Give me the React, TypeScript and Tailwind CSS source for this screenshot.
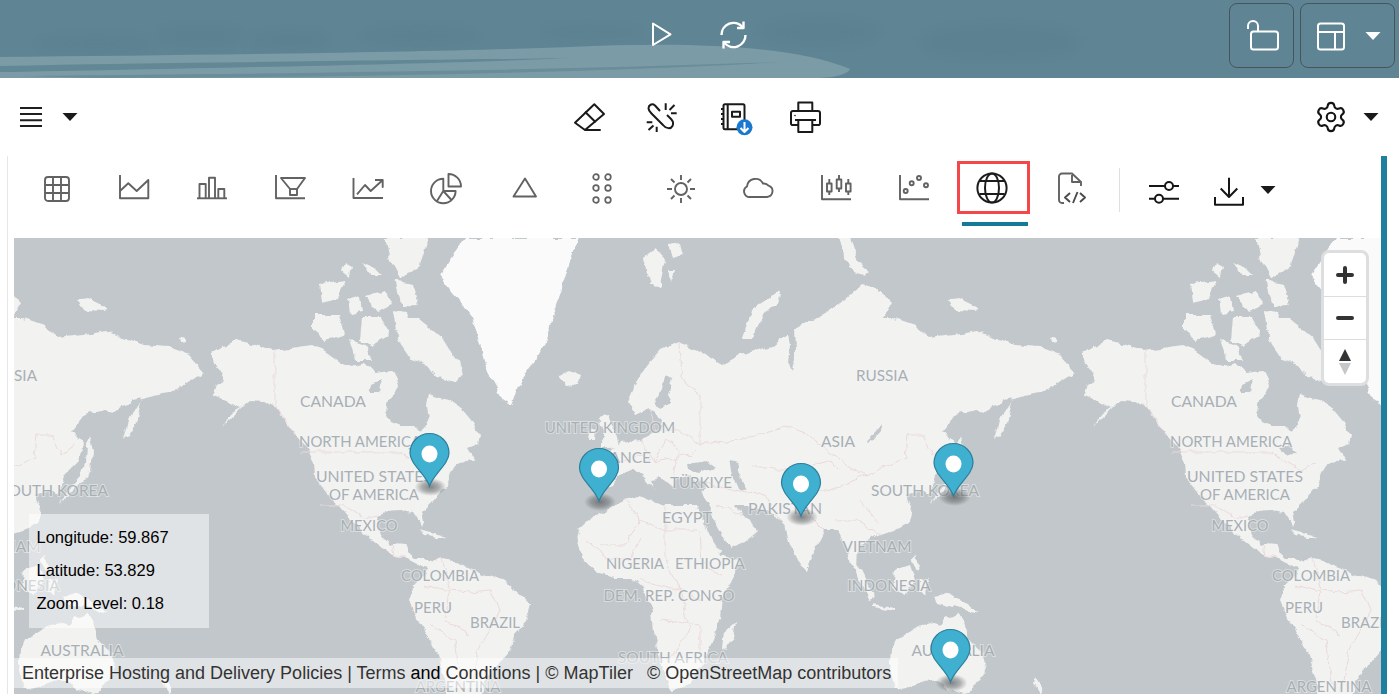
import React from "react";
import { Settings } from "lucide-react";

const Ic = ({ children, color = "#626262", w = 1.9 }: { children: React.ReactNode; color?: string; w?: number }) => (
  <svg width="32" height="32" viewBox="0 0 32 32" fill="none" stroke={color} strokeWidth={w} strokeLinejoin="round" strokeLinecap="butt" className="block shrink-0 overflow-visible">
    {children}
  </svg>
);

const Caret = ({ color = "#1a1a1a" }: { color?: string }) => (
  <svg width="16" height="8" viewBox="0 0 16 8" className="block shrink-0"><path d="M0.5 0H15.5L8 8Z" fill={color} /></svg>
);

const land: string[] = [
  "212,352 222,346 237,340 250,343 272,351 290,349 312,346 325,352 339,362 352,366 365,362 375,372 393,370 400,384 395,392 388,401 386,412 392,422 402,426 414,426 420,432 425,428 428,418 426,405 428,394 436,397 448,400 460,408 470,420 480,436 478,444 468,448 474,458 462,462 455,466 449,476 445,488 437,497 428,506 422,512 424,522 422,527 417,518 413,512 400,510 388,511 379,515 377,525 380,533 390,545 395,543 405,544 408,552 415,558 424,558 434,562 430,568 424,567 410,560 397,556 383,548 370,538 355,524 345,512 339,505 330,497 315,478 314,462 305,445 295,435 285,422 277,408 263,402 250,401 243,407 232,418 223,428 232,413 241,408 228,402 214,395 217,385 225,380 219,371 212,362",
  "430,563 442,558 455,560 468,568 482,574 497,578 515,590 531,605 526,622 515,634 510,650 498,665 490,672 482,690 478,700 448,700 445,680 438,655 425,632 414,615 409,600 414,585 424,575",
  "576,540 580,527 590,518 603,512 612,506 625,500 638,496 650,500 665,505 680,505 697,505 703,520 712,540 722,556 740,560 735,575 722,598 720,618 713,640 702,665 690,685 672,690 662,670 655,640 652,612 645,590 632,578 615,578 598,574 585,560",
  "585,470 587,485 598,491 610,487 620,475 632,468 645,478 655,490 650,480 660,478 672,488 678,478 690,476 705,482 702,495 708,505 720,530 730,548 745,542 758,531 745,515 735,505 750,505 770,512 785,525 790,545 800,565 807,570 815,550 825,530 838,530 845,545 850,565 857,570 858,545 870,540 880,535 895,530 910,522 912,505 905,495 920,490 930,495 935,475 950,460 955,445 943,430 955,415 975,410 985,412 1005,400 1025,395 1048,390 1075,372 1060,355 1039,347 1015,345 977,331 955,335 928,338 915,325 895,318 883,318 892,302 880,290 862,285 845,300 812,320 795,330 775,345 758,350 740,355 722,365 705,355 680,341 660,350 647,365 635,385 628,401 635,415 650,408 662,420 660,430 640,440 620,442 610,450 612,465 595,468",
  "892,650 895,640 908,633 919,625 930,622 940,625 945,617 953,618 958,612 963,622 970,640 982,652 986,665 980,682 965,694 945,688 938,680 925,682 905,688 895,690 890,670",
  "313,315 340,315 345,335 325,340 313,330",
  "320,283 345,280 335,300 322,303",
  "397,318 418,318 442,338 464,372 455,382 438,378 428,365 412,360 398,340",
  "385,238 428,238 420,265 400,278 390,260",
  "362,262 375,268 382,275 370,275",
  "366,296 385,290 393,306 378,312",
  "362,318 380,318 390,335 372,345 360,340",
  "345,262 352,266 350,278 342,272",
  "348,300 360,296 362,312 350,314",
  "393,310 405,312 410,328 396,330",
  "395,280 412,284 418,305 402,306",
  "350,340 366,345 372,360 356,360",
  "558,376 570,371 581,375 578,384 566,386",
  "643,258 655,248 665,258 660,288 650,285",
  "668,245 680,243 683,255 672,258",
  "668,270 675,270 672,282",
  "598,418 608,416 616,438 618,446 600,448 606,436",
  "590,428 597,430 596,440 589,440",
  "742,338 752,310 780,291 782,296 762,316 752,338",
  "948,300 958,298 979,308 976,311 955,310",
  "838,238 850,238 858,262 870,272 865,276 848,268",
  "960,436 964,452 962,470 950,485 935,498 930,505 935,495 950,478 957,462 958,445",
  "995,441 1000,420 1012,401 1008,420 1000,436",
  "854,560 862,570 875,598 870,600 858,580",
  "872,604 895,608 895,611 872,607",
  "895,570 910,565 915,580 905,595 893,590",
  "920,580 928,578 926,595 920,590",
  "934,597 950,593 960,600 970,607 979,613 965,610 950,606 938,603",
  "915,555 920,565 917,570 912,560",
  "722,648 724,632 736,621 733,638 727,650",
  "1035,678 1042,690 1040,694 1033,684",
  "420,530 435,534 446,538 436,538 425,535",
  "180,338 184,336 186,341 181,342",
];

const water: string[] = [
  "665,375 672,378 668,395 672,402 660,408 655,400 662,388",
  "687,463 705,460 716,468 700,474 688,471",
  "729,461 737,463 741,478 747,491 738,490 733,478",
  "867,443 875,432 882,425 880,432 872,442",
  "787,330 795,328 796,350 792,371 788,362 790,345",
  "372,385 383,380 378,392 370,392",
  "408,448 418,446 426,452 415,456",
];

const borders: string[] = [
  "275,351 275,405 295,435",
  "300,452 395,452 410,458 430,470 445,462",
  "320,505 345,505 365,518 378,515",
  "393,545 395,555 410,560",
  "442,558 450,590 470,592 490,590 500,610 490,630 478,650 470,690",
  "425,585 450,592 445,620 470,635",
  "430,625 455,640 462,690",
  "600,545 625,545 640,520 665,530 697,530",
  "585,540 610,560 630,560 640,540",
  "640,520 625,500",
  "665,505 665,560 680,590 700,600",
  "640,580 680,590 690,630 670,660",
  "700,530 702,565 722,575",
  "660,620 700,625 700,650",
  "612,465 640,455 655,462 665,440 680,450 672,475",
  "640,440 655,462 690,455 700,445",
  "650,408 655,430 680,430 700,445",
  "680,341 682,380 700,395 700,445",
  "700,445 762,435 785,426 803,431 827,451 865,476 905,458 907,435 923,435 932,455 945,445",
  "751,465 775,470 790,470 800,495 830,490 865,476",
  "700,482 740,492 765,495 780,520",
  "715,505 745,515",
  "790,495 825,530",
  "835,520 855,520 880,535",
  "800,470 830,460 838,470",
  "860,500 880,525",
];

const labels: [string, number, number, number][] = [
  ["RUSSIA", 882, 381, 52], ["ASIA", 838, 447, 34], ["CANADA", 333, 407, 66], ["NORTH AMERICA", 360, 447, 122],
  ["UNITED STATES", 374, 482, 116], ["OF AMERICA", 374, 500, 90], ["MEXICO", 369, 531, 57], ["COLOMBIA", 440, 581, 78],
  ["PERU", 433, 613, 38], ["BRAZIL", 495, 628, 50], ["UNITED KINGDOM", 610, 433, 130], ["FRANCE", 621, 463, 60],
  ["TÜRKIYE", 701, 488, 62], ["EGYPT", 687, 523, 50], ["NIGERIA", 635, 569, 58], ["ETHIOPIA", 710, 569, 70],
  ["DEM. REP. CONGO", 669, 601, 131], ["SOUTH AFRICA", 673, 663, 110], ["PAKISTAN", 785, 514, 74],
  ["SOUTH KOREA", 925, 496, 108], ["VIETNAM", 877, 552, 69], ["INDONESIA", 889, 591, 83], ["AUSTRALIA", 953, 656, 83],
  ["ARGENTINA", 458, 692, 85],
];

const World = ({ dx }: { dx: number }) => (
  <g transform={`translate(${dx} 0)`}>
    <g filter="url(#coast)">
      <polygon points="440,275 464,238 579,238 567,271 545,345 527,371 511,404 504,401 487,371 473,318" fill="#fafafa" />
      {land.map((p, i) => <polygon key={i} points={p} fill="#f2f2f1" />)}
      {water.map((p, i) => <polygon key={i} points={p} fill="#c1c7ca" />)}
      {borders.map((p, i) => <polyline key={i} points={p} fill="none" stroke="#ecd9db" strokeWidth="1" />)}
    </g>
    {labels.map(([t, x, y, w]) => (
      <text key={t} x={x} y={y} textAnchor="middle" textLength={w} lengthAdjust="spacingAndGlyphs" fontSize="15" fill="#a8afb3" stroke="#f4f5f5" strokeOpacity="0.5" strokeWidth="2" className="font-['Lato',sans-serif] [paint-order:stroke]">{t}</text>
    ))}
  </g>
);

const Pin = ({ x, y }: { x: number; y: number }) => (
  <g transform={`translate(${x} ${y})`}>
    <ellipse cx="1" cy="1" rx="16" ry="9" fill="url(#pinShadow)" />
    <path d="M0 0C-4 -12 -19.5 -22 -19.5 -33A19.5 19.5 0 0 1 19.5 -33C19.5 -22 4 -12 0 0Z" fill="#3fb0d0" stroke="#2b7f9a" strokeWidth="1.2" />
    <ellipse cx="0" cy="-32" rx="8" ry="8.5" fill="#ffffff" />
  </g>
);

const pins = [[429.5, 486], [599, 501], [801, 516], [953.5, 496], [950.5, 682]];

const Tab = ({ children, active = false, nudge = false }: { children: React.ReactNode; active?: boolean; nudge?: boolean }) => (
  <div className="flex h-full w-[78px] shrink-0 flex-col items-center pt-[5px]">
    <div className={active ? "ml-[3px] flex h-[53px] w-[73px] items-center justify-center border-[3px] border-[#f44749] pr-[3px]" : nudge ? "flex h-[53px] w-[73px] items-center justify-center pl-[2px]" : "flex h-[53px] w-[73px] items-center justify-center"}>{children}</div>
    {active && <div className="ml-[6px] mt-[8px] h-[4px] w-[66px] bg-[#147a9a]" />}
  </div>
);

export default function App() {
  return (
    <div className="flex h-[694px] w-[1399px] flex-col overflow-hidden bg-white font-['Liberation_Sans',sans-serif]">
      <header className="relative grid h-[78px] shrink-0 grid-cols-[1fr_auto_1fr] items-center bg-[#5f8595]">
        <svg className="absolute inset-0 h-full w-full" viewBox="0 0 1399 78" preserveAspectRatio="none">
          <defs><filter id="soft"><feGaussianBlur stdDeviation="6" /></filter></defs>
          <g fill="#4f7381" opacity="0.16" filter="url(#soft)">
            <ellipse cx="95" cy="44" rx="60" ry="9" /><ellipse cx="200" cy="36" rx="45" ry="11" /><ellipse cx="290" cy="40" rx="40" ry="10" />
            <ellipse cx="420" cy="36" rx="60" ry="10" /><ellipse cx="590" cy="32" rx="50" ry="7" /><ellipse cx="820" cy="32" rx="60" ry="14" /><ellipse cx="1000" cy="42" rx="80" ry="18" />
          </g>
          <path d="M0 57C200 55 450 52 570 47C680 42 790 44 850 69C848 74 835 78 815 78L0 78Z" fill="#7b9ba7" />
          <path d="M0 66C200 62 450 60 568 58C450 64 200 68 14 72L0 72Z" fill="#628795" />
          <path d="M20 76C200 74 500 72 780 62C640 72 300 78 100 78Z" fill="#6a8d9a" />
        </svg>
        <div />
        <div className="relative mb-[8px] flex items-center gap-[40px] pr-[3px]">
          <Ic color="#ffffff" w={2}><path d="M7 4.5V26L24.5 15.3Z" /></Ic>
          <Ic color="#ffffff" w={2.4}>
            <path d="M3.5 16A12 12 0 0 1 24.5 8" /><path d="M27.5 16A12 12 0 0 1 6.5 24" /><path d="M25.5 2.5V9H19" /><path d="M5.5 29.5V23H12" />
          </Ic>
        </div>
        <div className="relative flex items-start justify-end gap-[6px] self-start pr-[4px] pt-[3px]">
          <div className="flex h-[65px] w-[65px] items-center justify-center rounded-[8px] border border-[#48545c]">
            <Ic color="#ffffff" w={2}><rect x="5" y="11.5" width="27" height="18" rx="2.5" /><path d="M2 9V6A5 5 0 0 1 12 6V11.5" /></Ic>
          </div>
          <div className="flex h-[65px] w-[95px] items-center justify-start gap-[18px] rounded-[8px] border border-[#48545c] pl-[14px]">
            <Ic color="#ffffff" w={2}><rect x="3" y="3.5" width="26" height="26" rx="2.5" /><path d="M3 12H29M20 12V29" /></Ic>
            <Caret color="#ffffff" />
          </div>
        </div>
      </header>

      <div className="grid h-[78px] shrink-0 grid-cols-[1fr_auto_1fr] items-center">
        <div className="flex items-center gap-[20px] pl-[20px]">
          <svg width="22" height="20" viewBox="0 0 22 20" className="block" stroke="#1f1f1f" strokeWidth="2"><path d="M0 1H22M0 7H22M0 13.3H22M0 19H22" /></svg>
          <Caret />
        </div>
        <div className="flex items-center pr-[3px]">
          <Ic color="#1a1a1a" w={2}><path d="M20.3 3.3L30 13L11 29L1 21.7Z" /><path d="M11 29H26.7M11 10.7L21.7 21.3" /></Ic>
          <div className="ml-[40px]">
            <Ic color="#1a1a1a" w={2}>
              <path d="M14 10L9 4.5C6 2 2.5 4 2.5 7.5C2.5 9.5 4 11 5.5 12.5L17 24C20 28 25 28 26.5 25C28 22 26.5 19.5 25 18L21 14" />
              <path d="M19.7 2.3V9M23.5 9L28.5 4M25 12.3H30.7M0.7 21.3H6.3M2.5 29L7.5 24.5M10.7 25.7V31" />
            </Ic>
          </div>
          <div className="ml-[43px]">
            <Ic color="#1a1a1a" w={2}>
              <rect x="2.5" y="3.3" width="21" height="25" rx="1.5" />
              <path d="M6.7 3.3V28.3M0 8H3M0 13H3M0 18H3M0 23H3" />
              <rect x="11" y="10.7" width="8" height="5" />
              <circle cx="23.5" cy="26.3" r="8" fill="#1a78d0" stroke="none" />
              <path d="M23.5 21V31M19.5 27L23.5 31L27.5 27" stroke="#ffffff" strokeWidth="2" />
            </Ic>
          </div>
          <div className="ml-[37px]">
            <Ic color="#1a1a1a" w={2}>
              <path d="M8.3 10V1.5H22.3V10" />
              <path d="M8 24H2A1.5 1.5 0 0 1 1 22.5V12A2 2 0 0 1 3 10H28A2 2 0 0 1 30 12V22.5A1.5 1.5 0 0 1 29 24H23" />
              <path d="M5 19H26" /><rect x="8.3" y="19" width="14" height="12" />
              <circle cx="5" cy="14.5" r="0.8" fill="#1a1a1a" stroke="none" />
            </Ic>
          </div>
        </div>
        <div className="flex items-center justify-end gap-[15px] pr-[20px]">
          <Settings size={34} strokeWidth={1.5} color="#141414" />
          <Caret />
        </div>
      </div>

      <div className="flex min-h-0 flex-1">
        <div className="w-[8px] shrink-0 border-r border-[#e6e6e6]" />
        <div className="flex min-w-0 flex-1 flex-col pl-[6px]">
          <div className="flex h-[82px] shrink-0 items-start pl-[3px]">
            <Tab nudge><Ic><rect x="4" y="5" width="24" height="24" rx="3" /><path d="M12 5V29M20 5V29M4 13H28M4 21H28" /></Ic></Tab>
            <Tab><Ic><path d="M2 3V26.3H30.3V8L18.7 19L10.3 11.3L2 19" /></Ic></Tab>
            <Tab><Ic><path d="M1 26.3H31" /><path d="M3.5 26.3V12H9.7V26.3M13 26.3V5.7H19V26.3M22.3 26.3V17H28.3V26.3" /></Ic></Tab>
            <Tab><Ic><path d="M2 3V26.3H31" /><path d="M7 6H31L23 17V23H16V17Z" /><path d="M16 17H23" /></Ic></Tab>
            <Tab><Ic><path d="M1.5 6V26H31" /><path d="M5 22.3L13 13L18.7 19L30.7 8M23 8H30.7V15.7" /></Ic></Tab>
            <Tab><Ic><path d="M18.5 2A12.5 12.5 0 0 1 31 14.5H18.5Z" /><path d="M25.6 19A12.3 12.3 0 1 1 13.3 6.7V19ZM13.3 19L6.7 29.5M13.3 19L21.5 28" /></Ic></Tab>
            <Tab nudge><Ic><path d="M16 6.5L27 24.5H4.5Z" /></Ic></Tab>
            <Tab><Ic w={1.7}>{[5, 16, 28].map((y) => <React.Fragment key={y}><circle cx="10" cy={y} r="2.8" /><circle cx="22" cy={y} r="2.8" /></React.Fragment>)}</Ic></Tab>
            <Tab nudge><Ic><circle cx="16" cy="17" r="6" /><path d="M16 3V8M16 26V31M2 17H7M25 17H30M6 7L9.5 10.5M26 7L22.5 10.5M6 27L9.5 23.5M26 27L22.5 23.5" /></Ic></Tab>
            <Tab><Ic><path d="M8 25H25A5.8 5.8 0 0 0 26.5 13.7A6 6 0 0 0 21 11.5A8.5 8.5 0 0 0 5 14.5A5.6 5.6 0 0 0 8 25Z" /></Ic></Tab>
            <Tab><Ic><path d="M2 3V27.3H31" /><path d="M9.3 7V23M19 3V20M28.3 7V23" /><rect x="7" y="11.5" width="4.6" height="8" fill="#ffffff" /><rect x="16.7" y="7.5" width="4.6" height="9" fill="#ffffff" /><rect x="26" y="11.5" width="4.6" height="8" fill="#ffffff" /></Ic></Tab>
            <Tab><Ic><path d="M2 3V27.3H31" /><circle cx="7.7" cy="19" r="2" /><circle cx="13.7" cy="11.3" r="2" /><circle cx="21" cy="6" r="2" /><circle cx="28" cy="13.3" r="2" /></Ic></Tab>
            <Tab active><Ic color="#1c1c1c" w={2}><circle cx="16" cy="16" r="14.6" /><ellipse cx="16" cy="16" rx="7" ry="14.6" /><path d="M3.5 9H28.5M3.5 22H28.5" /></Ic></Tab>
            <Tab nudge><Ic><path d="M9 31H7A3 3 0 0 1 4 28V4.5A3 3 0 0 1 7 1.5H17L26 10V14" /><path d="M17 3V10H25" /><path d="M15 21L10 25.5L15 30M25 21L30 25.5L25 30M22.5 20L18 31" stroke="#4a4a4a" /></Ic></Tab>
            <div className="ml-[10px] mt-[12px] h-[44px] w-px shrink-0 bg-[#dfdfdf]" />
            <div className="ml-[28px] mt-[18px]"><Ic color="#161616" w={2}><path d="M1 12H17M25 12H31M1 24.7H7M15 24.7H31" /><circle cx="21" cy="12" r="4" /><circle cx="11" cy="24.7" r="4" /></Ic></div>
            <div className="ml-[33px] mt-[18px]"><Ic color="#161616" w={2}><path d="M16 3.7V23M7.7 14.5L16 23L24.3 14.5M2 23V30.7H30V23" /></Ic></div>
            <div className="ml-[15px] mt-[30px]"><Caret /></div>
          </div>

          <div className="relative min-h-0 flex-1 overflow-hidden bg-[#c1c7ca]">
            <svg className="absolute inset-0 h-full w-full" viewBox="14 238 1367 456">
              <defs>
                <radialGradient id="pinShadow"><stop offset="0%" stopColor="#5c5f61" stopOpacity="0.75" /><stop offset="55%" stopColor="#5c5f61" stopOpacity="0.45" /><stop offset="100%" stopColor="#5c5f61" stopOpacity="0" /></radialGradient>
                <filter id="coast" x="-5%" y="-5%" width="110%" height="110%">
                  <feTurbulence type="fractalNoise" baseFrequency="0.09" numOctaves="3" seed="7" result="n" />
                  <feDisplacementMap in="SourceGraphic" in2="n" scale="7" xChannelSelector="R" yChannelSelector="G" />
                </filter>
              </defs>
              <World dx={-871} />
              <World dx={0} />
              <World dx={871} />
              {pins.map(([x, y]) => <Pin key={x} x={x} y={y} />)}
            </svg>

            <div className="absolute left-[15px] top-[276px] flex h-[114px] w-[180px] flex-col justify-center bg-[#ffffff80] pb-[2px] pl-[7.5px] text-[16.5px] leading-[33px] text-black">
              <div>Longitude: 59.867</div>
              <div>Latitude: 53.829</div>
              <div>Zoom Level: 0.18</div>
            </div>

            <div className="absolute bottom-[6px] left-0 flex h-[30px] w-[884px] items-center whitespace-nowrap bg-[#ffffff80] pl-[8px] text-[18px] text-[#333333]">
              <span>Enterprise Hosting and Delivery Policies | Terms</span><span className="mx-[5px] text-black">and</span><span>Conditions | © MapTiler</span><span className="ml-[14px]">© OpenStreetMap contributors</span>
            </div>

            <div className="absolute right-[12px] top-[12px] flex h-[136px] w-[48px] flex-col rounded-[8px] border-[3px] border-[#dcdedf] bg-white">
              <div className="flex h-[44px] items-center justify-center border-b border-[#dddddd]">
                <svg width="18" height="18" viewBox="0 0 18 18" stroke="#333333" strokeWidth="4" strokeLinecap="round"><path d="M2 9H16M9 2V16" /></svg>
              </div>
              <div className="flex h-[43px] items-center justify-center border-b border-[#dddddd]">
                <svg width="18" height="18" viewBox="0 0 18 18" stroke="#333333" strokeWidth="4" strokeLinecap="round"><path d="M2 9H16" /></svg>
              </div>
              <div className="flex flex-1 items-center justify-center">
                <svg width="14" height="26" viewBox="0 0 14 26"><path d="M7 0L13 12H1Z" fill="#333333" /><path d="M7 26L13 14H1Z" fill="#c4c8ca" /></svg>
              </div>
            </div>
          </div>
        </div>
        <div className="w-[6px] shrink-0 bg-[#1f7f9f]" />
        <div className="w-[12px] shrink-0 bg-white" />
      </div>
    </div>
  );
}
